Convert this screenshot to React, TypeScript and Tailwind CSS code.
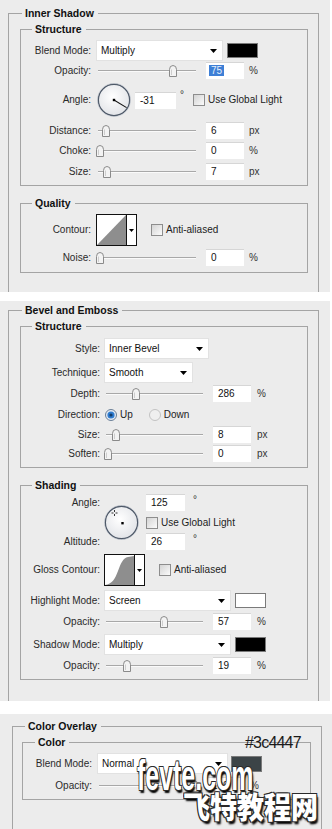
import React from "react";

const line = "border-[#a4a4a4]";

function Group({
  title,
  lead,
  className = "",
  bodyClass = "",
  open = false,
  children,
}: {
  title: string;
  lead: string;
  className?: string;
  bodyClass?: string;
  open?: boolean;
  children: React.ReactNode;
}) {
  return (
    <div className={`flex flex-col ${className}`}>
      <div className="flex h-[13px] shrink-0">
        <div className={`mt-[6px] shrink-0 border-l border-t ${line} ${lead}`} />
        <span className="pl-[3px] pr-[4px] text-[10.5px] font-bold leading-[13px] text-[#111]">{title}</span>
        <div className={`mt-[6px] flex-1 border-r border-t ${line}`} />
      </div>
      <div className={`flex-1 border-x ${open ? "" : "border-b"} ${line} ${bodyClass}`}>{children}</div>
    </div>
  );
}

function Row({
  label,
  lw,
  gap,
  className = "",
  children,
}: {
  label: string;
  lw: string;
  gap: string;
  className?: string;
  children: React.ReactNode;
}) {
  return (
    <div className={`flex items-center ${className}`}>
      <span className={`shrink-0 text-right text-[#2a2a2a] ${lw}`}>{label}</span>
      <div className={`flex h-full items-center ${gap}`}>{children}</div>
    </div>
  );
}

function Arrow() {
  return (
    <svg width="7" height="4" viewBox="0 0 7 4">
      <path d="M0 0H7L3.5 4Z" fill="#000" />
    </svg>
  );
}

function Select({ value, w }: { value: string; w: string }) {
  return (
    <div className={`flex h-full shrink-0 items-center justify-between border border-[#e2e2e2] bg-white pl-[4px] pr-[5px] ${w}`}>
      <span className="text-[#111]">{value}</span>
      <Arrow />
    </div>
  );
}

function Swatch({ className }: { className: string }) {
  return <div className={`h-[15px] w-[31px] shrink-0 border border-[#7a7a7a] ${className}`} />;
}

function Thumb({ className }: { className: string }) {
  return (
    <svg className={`absolute top-[3px] ${className}`} width="8" height="12" viewBox="0 0 8 12">
      <path d="M0.5 11.5V4.5Q0.5 0.5 4 0.5Q7.5 0.5 7.5 4.5V11.5Z" fill="#f3f3f3" stroke="#8a8a8a" />
      <path d="M2.5 4.5V10" stroke="#cdcdcd" />
    </svg>
  );
}

function Slider({ w, thumb }: { w: string; thumb: string }) {
  return (
    <div className={`relative h-[17px] shrink-0 ${w}`}>
      <div className="absolute left-[2px] right-[1px] top-[8px] h-px bg-[#a8a8a8] shadow-[0_1px_0_#fafafa]" />
      <Thumb className={thumb} />
    </div>
  );
}

function Num({ value, sel = false, w = "w-[38px]", className = "" }: { value: string; sel?: boolean; w?: string; className?: string }) {
  return (
    <div className={`h-[17px] shrink-0 border-t border-[#d6d6d6] bg-white leading-[16px] text-[#111] ${sel ? "pl-[3px]" : "pl-[5px]"} ${w} ${className}`}>
      {sel ? <span className="bg-[#3d7fd6] px-[2px] text-[#e6effa]">{value}</span> : value}
    </div>
  );
}

function Check({ className = "" }: { className?: string }) {
  return (
    <div className={`h-[12px] w-[12px] shrink-0 border border-[#8d8d8d] bg-linear-to-br from-[#d4d4d4] to-[#fbfbfb] ${className}`} />
  );
}

function Deg({ className }: { className: string }) {
  return <span className={`self-start text-[10px] leading-[10px] text-[#333] ${className}`}>°</span>;
}

function AngleDial() {
  return (
    <svg width="34" height="34" viewBox="0 0 34 34" className="ml-[1px] shrink-0">
      <defs>
        <radialGradient id="dg1" cx="0.45" cy="0.4" r="0.6">
          <stop offset="0" stopColor="#ffffff" />
          <stop offset="1" stopColor="#e2e4e8" />
        </radialGradient>
      </defs>
      <circle cx="17" cy="17" r="15.7" fill="url(#dg1)" stroke="#4e5968" strokeWidth="1.4" />
      <circle cx="17" cy="17" r="16.6" fill="none" stroke="#c9ced6" strokeWidth="0.6" />
      <line x1="17" y1="17" x2="29.6" y2="24.6" stroke="#111" strokeWidth="1.1" />
      <rect x="15.8" y="15.8" width="2.4" height="2.4" fill="#000" />
    </svg>
  );
}

function ShadeDial() {
  return (
    <svg width="35" height="35" viewBox="0 0 35 35" className="shrink-0">
      <defs>
        <radialGradient id="dg2" cx="0.45" cy="0.4" r="0.6">
          <stop offset="0" stopColor="#ffffff" />
          <stop offset="1" stopColor="#e2e4e8" />
        </radialGradient>
      </defs>
      <circle cx="17.5" cy="17.5" r="16.2" fill="url(#dg2)" stroke="#4e5968" strokeWidth="1.4" />
      <circle cx="17.5" cy="17.5" r="17.1" fill="none" stroke="#c9ced6" strokeWidth="0.6" />
      <path d="M10.5 5V7M10.5 9V11M7.5 8H9.5M11.5 8H13.5" stroke="#333" strokeWidth="1" />
      <rect x="17.3" y="17" width="2.4" height="2.4" fill="#000" />
    </svg>
  );
}

function ContourBox({ gloss = false }: { gloss?: boolean }) {
  return (
    <svg width="41" height="32" viewBox="0 0 41 32" className="shrink-0">
      <rect x="0.5" y="0.5" width="40" height="31" fill="#fff" stroke="#111" />
      {gloss ? (
        <path d="M1 31C8 30 11 25 14 17S19 4 24 3L30 2V31Z" fill="#8e8e8e" />
      ) : (
        <path d="M1 31L30 1V31Z" fill="#8e8e8e" />
      )}
      <line x1="30.5" y1="1" x2="30.5" y2="31" stroke="#111" />
      <path d="M33 15H38L35.5 18Z" fill="#000" />
    </svg>
  );
}

function Radio({ on, className = "" }: { on: boolean; className?: string }) {
  return (
    <svg width="12" height="12" viewBox="0 0 12 12" className={`shrink-0 ${className}`}>
      <circle cx="6" cy="6" r="5.5" fill={on ? "#e3ebf4" : "#efefef"} stroke={on ? "#6b7f96" : "#c2c2c2"} />
      {on && <circle cx="6" cy="6" r="3.6" fill="#2e7bcf" />}
      {on && <circle cx="6" cy="6" r="1.6" fill="#133d6b" />}
    </svg>
  );
}

function SliderRow({
  label,
  lw,
  gap,
  sw,
  thumb,
  value,
  unit,
  inGap,
  unitGap,
  sel = false,
  className = "",
}: {
  label: string;
  lw: string;
  gap: string;
  sw: string;
  thumb: string;
  value: string;
  unit: string;
  inGap: string;
  unitGap: string;
  sel?: boolean;
  className?: string;
}) {
  return (
    <Row label={label} lw={lw} gap={gap} className={`h-[17px] ${className}`}>
      <Slider w={sw} thumb={thumb} />
      <Num value={value} sel={sel} className={inGap} />
      <span className={`text-[#333] ${unitGap}`}>{unit}</span>
    </Row>
  );
}

export default function App() {
  const p1 = { lw: "w-[70px]", gap: "ml-[5px]" };
  const p2 = { lw: "w-[79px]", gap: "ml-[4px]" };
  const p3 = { lw: "w-[69px]", gap: "ml-[5px]" };

  return (
    <div className="min-h-[829px] w-[332px] bg-white font-['Liberation_Sans',Arial,sans-serif] text-[10px] leading-[12px] text-[#1c1c1c]">
      {/* Inner Shadow */}
      <div className="flex h-[292px] w-[330px] flex-col bg-[#ececec] pl-[8px] pt-[7px]">
        <Group title="Inner Shadow" lead="w-[14px]" open className="w-[311px] flex-1" bodyClass="pl-[11px] pt-[3px]">
          <Group title="Structure" lead="w-[12px]" className="w-[288px]" bodyClass="pt-[4px] pb-[5px]">
            <Row label="Blend Mode:" {...p1} className="h-[21px]">
              <Select value="Multiply" w="w-[127px]" />
              <Swatch className="ml-[4px] bg-black" />
            </Row>
            <SliderRow label="Opacity:" {...p1} sw="w-[101px]" thumb="left-[73px]" value="75" sel unit="%" inGap="ml-[9px]" unitGap="ml-[5px]" className="mt-[1px]" />
            <Row label="Angle:" {...p1} className="mt-[4px] h-[34px]">
              <AngleDial />
              <Num value="-31" w="w-[41px]" className="ml-[4px]" />
              <Deg className="ml-[4px] mt-[7px]" />
              <Check className="ml-[9px]" />
              <span className="ml-[3px] text-[#222]">Use Global Light</span>
            </Row>
            <SliderRow label="Distance:" {...p1} sw="w-[101px]" thumb="left-[6px]" value="6" unit="px" inGap="ml-[9px]" unitGap="ml-[5px]" className="mt-[5px]" />
            <SliderRow label="Choke:" {...p1} sw="w-[101px]" thumb="left-[0px]" value="0" unit="%" inGap="ml-[9px]" unitGap="ml-[5px]" className="mt-[3px]" />
            <SliderRow label="Size:" {...p1} sw="w-[101px]" thumb="left-[7px]" value="7" unit="px" inGap="ml-[9px]" unitGap="ml-[5px]" className="mt-[4px]" />
          </Group>
          <Group title="Quality" lead="w-[12px]" className="mt-[11px] w-[288px]" bodyClass="pt-[4px] pb-[6px]">
            <Row label="Contour:" {...p1} className="h-[32px]">
              <ContourBox />
              <Check className="ml-[14px]" />
              <span className="ml-[3px] text-[#222]">Anti-aliased</span>
            </Row>
            <SliderRow label="Noise:" {...p1} sw="w-[101px]" thumb="left-[0px]" value="0" unit="%" inGap="ml-[9px]" unitGap="ml-[5px]" className="mt-[3px]" />
          </Group>
        </Group>
      </div>

      {/* Bevel and Emboss */}
      <div className="mt-[9px] flex h-[400px] w-[330px] flex-col bg-[#ececec] pl-[8px] pt-[3px]">
        <Group title="Bevel and Emboss" lead="w-[14px]" open className="w-[311px] flex-1" bodyClass="pl-[11px] pt-[3px]">
          <Group title="Structure" lead="w-[12px]" className="w-[288px]" bodyClass="pt-[5px] pb-[5px]">
            <Row label="Style:" {...p2} className="h-[21px]">
              <Select value="Inner Bevel" w="w-[105px]" />
            </Row>
            <Row label="Technique:" {...p2} className="mt-[3px] h-[21px]">
              <Select value="Smooth" w="w-[89px]" />
            </Row>
            <SliderRow label="Depth:" {...p2} sw="w-[100px]" thumb="left-[28px]" value="286" unit="%" inGap="ml-[9px]" unitGap="ml-[6px]" className="mt-[2px]" />
            <Row label="Direction:" {...p2} className="mt-[4px] h-[17px]">
              <Radio on className="ml-[1px]" />
              <span className="ml-[3px] text-[#222]">Up</span>
              <Radio on={false} className="ml-[16px]" />
              <span className="ml-[3px] text-[#222]">Down</span>
            </Row>
            <SliderRow label="Size:" {...p2} sw="w-[100px]" thumb="left-[8px]" value="8" unit="px" inGap="ml-[9px]" unitGap="ml-[6px]" className="mt-[3px]" />
            <SliderRow label="Soften:" {...p2} sw="w-[100px]" thumb="left-[0px]" value="0" unit="px" inGap="ml-[9px]" unitGap="ml-[6px]" className="mt-[2px]" />
          </Group>
          <Group title="Shading" lead="w-[12px]" className="mt-[11px] w-[288px]" bodyClass="pt-[2px] pb-[5px]">
            <div className="flex h-[56px]">
              <div className="flex w-[79px] shrink-0 flex-col justify-between text-right text-[#2a2a2a]">
                <span className="leading-[17px]">Angle:</span>
                <span className="leading-[17px]">Altitude:</span>
              </div>
              <div className="ml-[4px] flex items-center">
                <ShadeDial />
              </div>
              <div className="ml-[7px] flex flex-col">
                <div className="flex">
                  <Num value="125" w="w-[39px]" />
                  <Deg className="ml-[8px] mt-[1px]" />
                </div>
                <div className="mt-[5px] flex h-[14px] items-center">
                  <Check />
                  <span className="ml-[3px] text-[#222]">Use Global Light</span>
                </div>
                <div className="mt-[3px] flex">
                  <Num value="26" w="w-[39px]" />
                  <Deg className="ml-[8px] mt-[1px]" />
                </div>
              </div>
            </div>
            <Row label="Gloss Contour:" {...p2} className="mt-[4px] h-[32px]">
              <ContourBox gloss />
              <Check className="ml-[14px]" />
              <span className="ml-[3px] text-[#222]">Anti-aliased</span>
            </Row>
            <Row label="Highlight Mode:" {...p2} className="mt-[4px] h-[21px]">
              <Select value="Screen" w="w-[127px]" />
              <Swatch className="ml-[4px] bg-white" />
            </Row>
            <SliderRow label="Opacity:" {...p2} sw="w-[100px]" thumb="left-[56px]" value="57" unit="%" inGap="ml-[9px]" unitGap="ml-[6px]" className="mt-[2px]" />
            <Row label="Shadow Mode:" {...p2} className="mt-[4px] h-[21px]">
              <Select value="Multiply" w="w-[127px]" />
              <Swatch className="ml-[4px] bg-black" />
            </Row>
            <SliderRow label="Opacity:" {...p2} sw="w-[100px]" thumb="left-[19px]" value="19" unit="%" inGap="ml-[9px]" unitGap="ml-[6px]" className="mt-[2px]" />
          </Group>
        </Group>
      </div>

      {/* Color Overlay */}
      <div className="relative mt-[13px] flex h-[115px] w-[332px] flex-col overflow-hidden bg-[#ececec] pl-[12px] pt-[6px]">
        <Group title="Color Overlay" lead="w-[13px]" open className="w-[310px] flex-1" bodyClass="pl-[9px] pt-[3px]">
          <Group title="Color" lead="w-[13px]" className="w-[289px]" bodyClass="pt-[4px] pb-[5px]">
            <Row label="Blend Mode:" {...p3} className="h-[21px]">
              <Select value="Normal" w="w-[131px]" />
              <Swatch className="ml-[3px] h-[16px] bg-[#3c4447]" />
            </Row>
            <SliderRow label="Opacity:" {...p3} sw="w-[101px]" thumb="left-[93px]" value="100" unit="%" inGap="ml-[9px]" unitGap="ml-[5px]" className="mt-[3px]" />
          </Group>
        </Group>

        <span className="absolute left-[245px] top-[21px] whitespace-nowrap text-[16px] leading-[16px] tracking-[-0.8px] text-[#1a1a1a]">#3c4447</span>

        <span className="absolute left-[137px] top-[40px] origin-left scale-x-[0.58] whitespace-nowrap text-[43px] font-bold leading-none text-white [text-shadow:-1px_-1px_0_#2a2a2a,1px_-1px_0_#2a2a2a,-1px_1px_0_#2a2a2a,1px_1px_0_#2a2a2a,2px_3px_2px_#000]">
          fevte.com
        </span>
        <span className="absolute left-[183px] top-[76px] origin-left scale-x-[0.9] whitespace-nowrap font-['Noto_Sans_CJK_SC',sans-serif] text-[30px] font-black leading-none text-white [text-shadow:-1px_-1px_0_#2a2a2a,1px_-1px_0_#2a2a2a,-1px_1px_0_#2a2a2a,1px_1px_0_#2a2a2a,2px_3px_2px_#000]">
          飞特教程网
        </span>
      </div>
    </div>
  );
}
